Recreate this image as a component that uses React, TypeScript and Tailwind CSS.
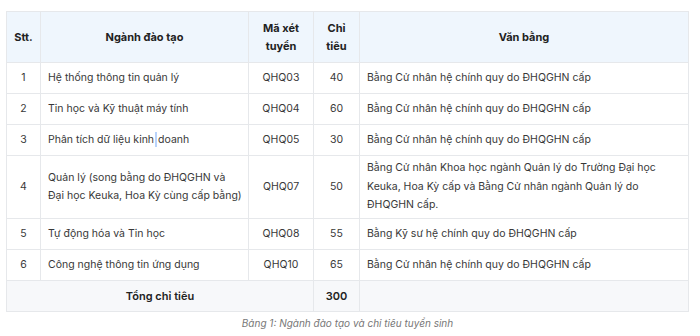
import React from "react";

type Row = {
  stt: string;
  nganh: React.ReactNode;
  ma: string;
  chiTieu: string;
  vanBang: React.ReactNode;
};

const rows: Row[] = [
  {
    stt: "1",
    nganh: "Hệ thống thông tin quản lý",
    ma: "QHQ03",
    chiTieu: "40",
    vanBang: "Bằng Cử nhân hệ chính quy do ĐHQGHN cấp",
  },
  {
    stt: "2",
    nganh: "Tin học và Kỹ thuật máy tính",
    ma: "QHQ04",
    chiTieu: "60",
    vanBang: "Bằng Cử nhân hệ chính quy do ĐHQGHN cấp",
  },
  {
    stt: "3",
    nganh: (
      <>
        Phân tích dữ liệu kinh
        <span className="mx-[1px] inline-block h-[15px] w-[2px] bg-[#b9d3fb] align-middle" />
        doanh
      </>
    ),
    ma: "QHQ05",
    chiTieu: "30",
    vanBang: "Bằng Cử nhân hệ chính quy do ĐHQGHN cấp",
  },
  {
    stt: "4",
    nganh: (
      <>
        Quản lý (song bằng do ĐHQGHN và
        <br />
        Đại học Keuka, Hoa Kỳ cùng cấp bằng)
      </>
    ),
    ma: "QHQ07",
    chiTieu: "50",
    vanBang: (
      <>
        Bằng Cử nhân Khoa học ngành Quản lý do Trường Đại học
        <br />
        Keuka, Hoa Kỳ cấp và Bằng Cử nhân ngành Quản lý do
        <br />
        ĐHQGHN cấp.
      </>
    ),
  },
  {
    stt: "5",
    nganh: "Tự động hóa và Tin học",
    ma: "QHQ08",
    chiTieu: "55",
    vanBang: "Bằng Kỹ sư hệ chính quy do ĐHQGHN cấp",
  },
  {
    stt: "6",
    nganh: "Công nghệ thông tin ứng dụng",
    ma: "QHQ10",
    chiTieu: "65",
    vanBang: "Bằng Cử nhân hệ chính quy do ĐHQGHN cấp",
  },
];

const cell = "border border-[#e6e8eb] px-[7px] py-[3px] whitespace-nowrap";

export default function App() {
  return (
    <div
      className="h-[336px] w-[700px] overflow-hidden bg-white pl-[6px] pt-[11px] text-[#383838]"
      style={{ fontFamily: "Inter, 'Open Sans', sans-serif" }}
    >
      <table className="w-[683px] table-fixed border-collapse text-[10.5px] leading-[18.5px]">
        <colgroup>
          <col className="w-[34px]" />
          <col className="w-[208px]" />
          <col className="w-[65px]" />
          <col className="w-[46px]" />
          <col />
        </colgroup>
        <thead>
          <tr className="h-[51px] bg-[#eff6fd] text-[11px] font-semibold text-[#222]">
            <th className={`${cell} text-center`}>Stt.</th>
            <th className={`${cell} text-center`}>Ngành đào tạo</th>
            <th className={`${cell} text-center`}>
              Mã xét
              <br />
              tuyển
            </th>
            <th className={`${cell} text-center`}>
              Chỉ
              <br />
              tiêu
            </th>
            <th className={`${cell} text-center`}>Văn bằng</th>
          </tr>
        </thead>
        <tbody>
          {rows.map((r) => (
            <tr key={r.stt} className={r.stt === "4" ? "h-[63px]" : "h-[31px]"}>
              <td className={`${cell} text-center`}>{r.stt}</td>
              <td className={cell}>{r.nganh}</td>
              <td className={`${cell} text-center`}>{r.ma}</td>
              <td className={`${cell} text-center`}>{r.chiTieu}</td>
              <td className={cell}>{r.vanBang}</td>
            </tr>
          ))}
          <tr className="h-[31px] bg-[#f7f8fa] text-[11px] font-semibold text-[#222]">
            <td colSpan={3} className={`${cell} text-center`}>
              Tổng chỉ tiêu
            </td>
            <td className={`${cell} text-center`}>300</td>
            <td className={cell}></td>
          </tr>
        </tbody>
      </table>
      <p className="mt-[4px] w-[683px] text-center text-[10px] italic text-[#777]">
        Bảng 1: Ngành đào tạo và chỉ tiêu tuyển sinh
      </p>
    </div>
  );
}
